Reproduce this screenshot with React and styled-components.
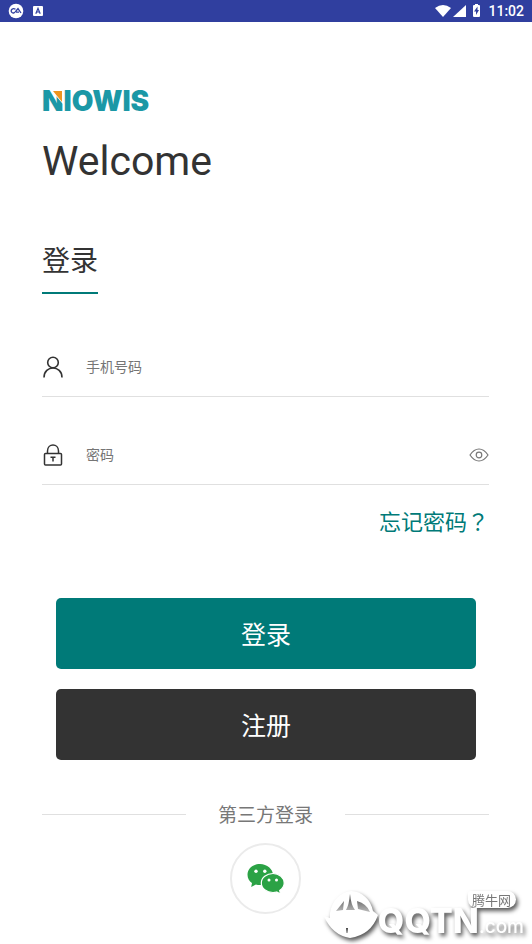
import { useState } from 'react';
import styled, { createGlobalStyle } from 'styled-components';

const GlobalStyle = createGlobalStyle`
  * {
    box-sizing: border-box;
  }
  body {
    margin: 0;
    background: #fff;
    color: #333;
    font-family: Roboto, "Noto Sans CJK SC", sans-serif;
  }
  button, input {
    font-family: inherit;
  }
`;

const Page = styled.div`
  position: relative;
  min-height: 100vh;
  overflow: hidden;
`;

const StatusBar = styled.header`
  display: flex;
  align-items: center;
  justify-content: space-between;
  height: 22px;
  padding: 0 8px;
  background: #303f9f;
  color: #fff;
`;

const StatusGroup = styled.div`
  display: flex;
  align-items: center;
  gap: ${props => props.$gap};
`;

const Clock = styled.span`
  font-size: 14px;
  font-weight: 500;
  line-height: 22px;
`;

const Main = styled.main`
  padding: 63px 43px 28px 42px;
`;

const Logo = styled.div`
  position: relative;
  color: #1b98a6;
  font-family: Inter, sans-serif;
  font-size: 28px;
  font-weight: 900;
  line-height: 32px;
`;

const LogoMark = styled.svg`
  position: absolute;
  top: 5px;
  left: 8px;
`;

const Welcome = styled.h1`
  margin: 19px 0 0;
  font-size: 41px;
  font-weight: 400;
  line-height: 50px;
`;

const Tab = styled.h2`
  display: inline-block;
  margin: 56px 0 0;
  padding-bottom: 10px;
  border-bottom: 2px solid #007a78;
  font-size: 28px;
  font-weight: 400;
  line-height: 40px;
`;

const Field = styled.div`
  display: flex;
  align-items: center;
  height: 60px;
  margin-top: ${props => props.$top};
  border-bottom: 1px solid #e0e0e0;
`;

const FieldLabel = styled.label`
  display: flex;
  width: 44px;
`;

const Input = styled.input`
  flex: 1;
  min-width: 0;
  padding: 0;
  border: 0;
  outline: 0;
  background: none;
  color: #333;
  font-size: 14px;
  line-height: 20px;

  &::placeholder {
    color: #757575;
    opacity: 1;
  }
`;

const EyeButton = styled.button`
  display: flex;
  padding: 0;
  border: 0;
  background: none;
  cursor: pointer;
`;

const ForgotRow = styled.div`
  display: flex;
  justify-content: flex-end;
  margin-top: 19px;
`;

const ForgotLink = styled.a`
  color: #007a78;
  font-size: 22px;
  line-height: 32px;
  text-decoration: none;
`;

// the TC face centres full-width punctuation
const Punctuation = styled.span`
  font-family: "Noto Sans CJK TC", sans-serif;
`;

const Actions = styled.div`
  display: flex;
  flex-direction: column;
  gap: 20px;
  margin: 59px 13px 0 14px;
`;

const Button = styled.button`
  height: 71px;
  padding: 0 0 2px;
  border: 0;
  border-radius: 5px;
  background: ${props => (props.$dark ? '#333' : '#007a78')};
  color: #fff;
  font-size: 25px;
  cursor: pointer;
`;

const Divider = styled.div`
  display: flex;
  align-items: center;
  gap: 32px;
  margin-top: 40px;
  color: #777;
  font-family: "Noto Sans CJK SC", sans-serif;
  font-size: 19px;
  line-height: 28px;

  &::before, &::after {
    content: "";
    flex: 1;
    height: 1px;
    background: #e0e0e0;
  }
`;

const WechatButton = styled.button`
  display: flex;
  align-items: center;
  justify-content: center;
  width: 71px;
  height: 71px;
  margin: 15px auto 0;
  padding: 0;
  border: 2px solid #ebebeb;
  border-radius: 50%;
  background: #fff;
  cursor: pointer;
`;

const Watermark = styled.div`
  position: absolute;
  right: 8px;
  bottom: 4px;
  display: flex;
  align-items: flex-end;
  color: #fff;
  font-family: Inter, sans-serif;
  filter: drop-shadow(2px 3px 2px rgba(0, 0, 0, 0.65));
`;

const WatermarkText = styled.div`
  display: flex;
  flex-direction: column;
  align-items: flex-end;
`;

const WatermarkTag = styled.span`
  margin-right: 8px;
  padding: 0 5px 0 4px;
  border-radius: 3px 9px 9px 9px;
  background: #fff;
  color: #777;
  font-family: "Noto Sans CJK SC", sans-serif;
  font-size: 13px;
  line-height: 17px;
`;

const WatermarkName = styled.span`
  font-size: 34px;
  font-weight: 800;
  line-height: 26px;
`;

const WatermarkDomain = styled.span`
  font-size: 19px;
  font-weight: 500;
`;

function StatusIcons() {
  return (
    <StatusGroup $gap="2px">
      <svg width="16" height="12" viewBox="0 0 16 12" fill="#fff">
        <path d="M0 3Q8-3 16 3L8 12Z" />
      </svg>
      <svg width="13" height="12" viewBox="0 0 13 12" fill="#fff">
        <path d="M13 0V12H0Z" />
      </svg>
      <svg width="18" height="14" viewBox="0 0 18 14">
        <path fill="#fff" d="M7 0h3v1h1q1 0 1 1v10q0 1-1 1H6q-1 0-1-1V2q0-1 1-1h1Z" />
        <path fill="#303f9f" d="M9.5 2.5 6 7.5H8V11L11 6H9.5Z" />
      </svg>
      <Clock>11:02</Clock>
    </StatusGroup>
  );
}

function App() {
  const [visible, setVisible] = useState(false);

  return (
    <Page>
      <GlobalStyle />
      <StatusBar>
        <StatusGroup $gap="9px">
          <svg width="16" height="16" viewBox="0 0 16 16" fill="none">
            <circle cx="8" cy="8" r="7.3" fill="#fff" />
            <path d="M7.5 6.3Q5.5 5 4 6.2 2.3 8 4 9.5 6 11 8 8L10 5.6 13 10M8 9.2H11" stroke="#303f9f" strokeWidth="1.3" />
          </svg>
          <svg width="10" height="10" viewBox="0 0 10 10">
            <rect width="10" height="10" rx="1" fill="#fff" />
            <path d="M2.8 7.7 5 2.3 7.2 7.7M3.6 6H6.4" fill="none" stroke="#303f9f" strokeWidth="1.2" />
          </svg>
        </StatusGroup>
        <StatusIcons />
      </StatusBar>
      <Main>
        <Logo>
          NIOWIS
          <LogoMark width="13" height="14" viewBox="0 0 13 14">
            <path d="M1 0H13V14L12 13Z" fill="#fff" />
            <path d="M3 1H12V12Z" fill="#ed951f" />
          </LogoMark>
        </Logo>
        <Welcome>Welcome</Welcome>
        <Tab>登录</Tab>
        <form onSubmit={e => e.preventDefault()}>
          <Field $top="43px">
            <FieldLabel htmlFor="phone" aria-label="手机号码">
              <svg width="22" height="24" viewBox="0 0 22 24" fill="none" stroke="#333" strokeWidth="1.6">
                <circle cx="11" cy="7.5" r="5.3" />
                <path d="M2 22.5C2 9.8 20 9.8 20 22.5" />
              </svg>
            </FieldLabel>
            <Input id="phone" type="tel" placeholder="手机号码" />
          </Field>
          <Field $top="28px">
            <FieldLabel htmlFor="password" aria-label="密码">
              <svg width="22" height="24" viewBox="0 0 22 24" fill="none" stroke="#333" strokeWidth="1.5">
                <rect x="2.5" y="10.5" width="17" height="11.5" rx="1" />
                <path d="M5.5 10.5V8C5.5 0 16.5 0 16.5 8V10.5M8.5 14.2H13.5M11 14V18.5" />
              </svg>
            </FieldLabel>
            <Input id="password" type={visible ? 'text' : 'password'} placeholder="密码" />
            <EyeButton type="button" aria-label="显示密码" onClick={() => setVisible(!visible)}>
              <svg width="20" height="16" viewBox="0 0 20 16" fill="none" stroke="#777" strokeWidth="1.2">
                <path d="M1 8Q5 2 10 2T19 8Q15 14 10 14T1 8Z" />
                <circle cx="10" cy="8" r="2.8" />
              </svg>
            </EyeButton>
          </Field>
          <ForgotRow>
            <ForgotLink href="#forgot">忘记密码<Punctuation>？</Punctuation></ForgotLink>
          </ForgotRow>
          <Actions>
            <Button type="submit">登录</Button>
            <Button type="button" $dark>注册</Button>
          </Actions>
        </form>
        <Divider>第三方登录</Divider>
        <WechatButton type="button" aria-label="微信登录">
          <svg width="38" height="32" viewBox="0 0 38 32" fill="#2ba245">
            <path d="M13 1C6 1 .5 5.7.5 11.8c0 3.4 1.7 6.4 4.5 8.3L4.2 24l4.7-2.5q2 .6 4.1.6C20 22.1 26 17.5 26 11.8S20 1 13 1Z" />
            <path d="M26 10.5C19.5 10.5 14.3 14.7 14.3 20S19.5 29.5 26 29.5q1.8 0 3.6-.5l4 2-.9-3.5C35.6 25.5 37.2 23 37.2 20c0-5.3-5-9.5-11.2-9.5Z" stroke="#fff" strokeWidth="1.2" />
            <g fill="#fff">
              <circle cx="9" cy="8.3" r="1.7" />
              <circle cx="17.8" cy="8.3" r="1.7" />
              <circle cx="22" cy="17" r="1.5" />
              <circle cx="29.5" cy="17" r="1.5" />
            </g>
          </svg>
        </WechatButton>
      </Main>
      <Watermark>
        <svg width="54" height="49" viewBox="0 0 54 49">
          <defs>
            <linearGradient id="fold" x1="0" y1="0" x2="0" y2="1">
              <stop offset="0" stopColor="#444" />
              <stop offset="1" stopColor="#bbb" />
            </linearGradient>
          </defs>
          <path fill="#fff" d="M6 22C8 9 17 1 27 0 38 0 47 9 49 20L54 24Q47 44 26 47 8 44 0 25L6 27Z" />
          <g fill="url(#fold)">
            <path d="M26 3Q27 14 31 19H22Q25 14 26 3ZM12 20 20 10 19 19ZM33 10Q43 13 46 21L34 18Z" />
            <path d="M22 37H24V42H22Z" />
          </g>
        </svg>
        <WatermarkText>
          <WatermarkTag>腾牛网</WatermarkTag>
          <WatermarkName>QQTN<WatermarkDomain>.com</WatermarkDomain></WatermarkName>
        </WatermarkText>
      </Watermark>
    </Page>
  );
}

export default App;
